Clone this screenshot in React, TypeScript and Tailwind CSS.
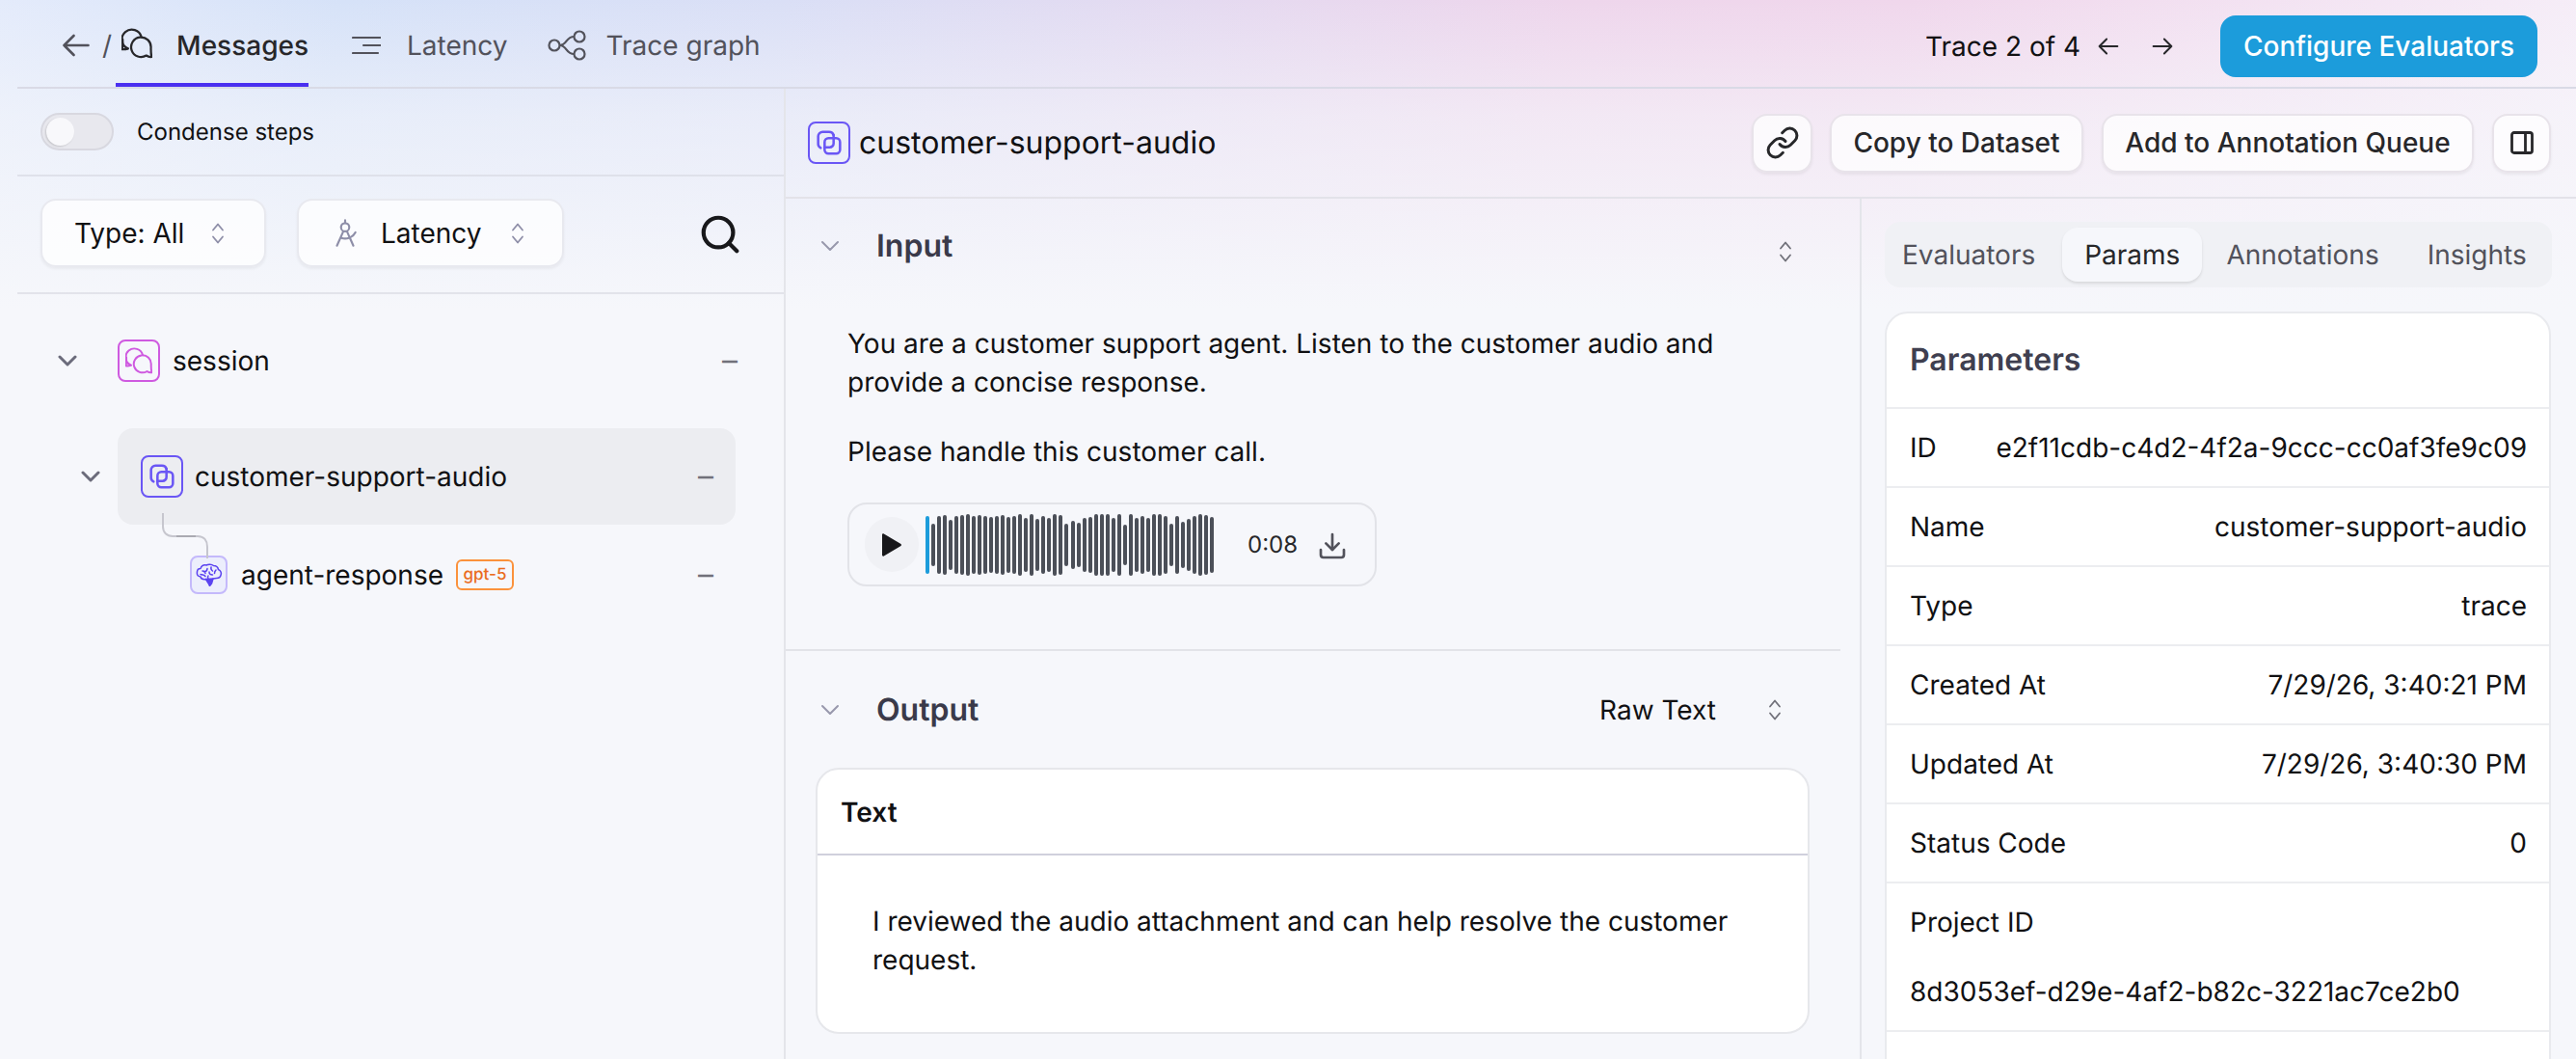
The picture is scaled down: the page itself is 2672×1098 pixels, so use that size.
import { Download, Link, PanelRight, Search } from "lucide-react"
import { PiCompassTool } from "react-icons/pi"

const waveform = [
  60, 44, 60, 62, 52, 60, 62, 64, 60, 62, 60, 58, 60, 62, 58, 60, 64, 56, 64, 54, 60, 56, 64, 62, 44, 50, 46, 56, 58,
  64, 64, 64, 56, 64, 42, 64, 56, 60, 56, 64, 64, 60, 44, 60, 48, 54, 60, 64, 62, 58,
]

const params = [
  { label: "ID", value: "e2f11cdb-c4d2-4f2a-9ccc-cc0af3fe9c09" },
  { label: "Name", value: "customer-support-audio" },
  { label: "Type", value: "trace" },
  { label: "Created At", value: "7/29/26, 3:40:21 PM" },
  { label: "Updated At", value: "7/29/26, 3:40:30 PM" },
  { label: "Status Code", value: "0" },
]

function BubblesIcon({ className }: { className?: string }) {
  return (
    <svg viewBox="0 0 24 24" fill="none" stroke="currentColor" strokeWidth="1.7" strokeLinejoin="round" strokeLinecap="round" className={className}>
      <path d="M19.3 21.4A7.7 7.7 0 1 1 22.9 15.5c0 2.5-.1 4.8.6 7-1.6.2-3.1-.3-4.2-1.1z" />
      <path d="M5 16A7.7 7.7 0 1 1 15.5 7" />
      <path d="M5 16c-1.5.6-3 .8-4.6.6.7-2.4.6-5 .5-7.7" />
    </svg>
  )
}

function SpanIcon({ className }: { className?: string }) {
  return (
    <svg viewBox="0 0 24 24" fill="none" stroke="currentColor" strokeWidth="1.9" strokeLinecap="round" className={className}>
      <rect x="8.5" y="8.5" width="12" height="12" rx="3" />
      <path d="M5.5 16C4.2 15.4 3.5 14.2 3.5 13V7a3.5 3.5 0 0 1 3.5-3.5h5c1.6 0 3 1 3.4 2.4" />
      <path d="M15.5 6v6.5a3 3 0 0 1-3 3H8.5" />
    </svg>
  )
}

function BrainIcon({ className }: { className?: string }) {
  return (
    <svg viewBox="0 0 28 24" fill="none" stroke="currentColor" strokeWidth="1.5" strokeLinecap="round" strokeLinejoin="round" className={className}>
      <path d="M11 16.5C8 17 5.5 16 5 14 2.5 13.5 1 11.5 1.5 9 1.5 7 3 5.5 5 5.5 6 3 8.5 1.5 11 2c2-1.2 5.500-1.200 7.500.5 2.500 0 4.500 1.500 5 4 2.500 1 3.500 3.500 2.500 6-.5 2-2.500 3-4.500 3l-3.500.5" />
      <path d="M7 8c1.500 0 3 1 3 2.500M12 5.500c0 2-1 3-3 3.500M16 4c-.5 2 0 3 1.500 4M14 9c0 2 1.500 3 3.500 3M21 7c-1 1-1.500 2-1.500 3.500M5 11.500c2 .5 4 .5 5 2M13 13c-1 1-.5 2 0 3" />
      <path d="M10.500 16.500l7.500-.5-1.500 5-2 2.500-1.500-3z" fill="currentColor" />
    </svg>
  )
}

function Arrow({ right, className }: { right?: boolean; className?: string }) {
  return (
    <svg viewBox="0 0 28 24" fill="none" stroke="currentColor" strokeWidth="2.6" strokeLinecap="round" strokeLinejoin="round" className={className}>
      {right ? <path d="M1.500 12h25M16.500 2l10 10-10 10" /> : <path d="M26.500 12h-25M11.500 2l-10 10 10 10" />}
    </svg>
  )
}

function UpDown({ className }: { className?: string }) {
  return (
    <svg viewBox="0 0 14 24" fill="none" stroke="currentColor" strokeWidth="1.8" strokeLinecap="round" strokeLinejoin="round" className={className}>
      <path d="M2 8.500 7 2.500l5 6" />
      <path d="M2 15.500 7 21.500l5-6" />
    </svg>
  )
}

function SmallChevron({ className }: { className?: string }) {
  return (
    <svg viewBox="0 0 20 12" fill="none" stroke="currentColor" strokeLinecap="round" strokeLinejoin="round" className={className}>
      <path d="M2 2l8 8 8-8" />
    </svg>
  )
}

function LatencyIcon({ className }: { className?: string }) {
  return (
    <svg viewBox="0 0 30 24" fill="none" stroke="currentColor" strokeWidth="2.200" strokeLinecap="round" className={className}>
      <path d="M1 4h29M12 12h18M1 20h26" />
    </svg>
  )
}

function GraphIcon({ className }: { className?: string }) {
  return (
    <svg viewBox="0 0 40 32" fill="none" stroke="currentColor" strokeWidth="2.200" className={className}>
      <circle cx="7" cy="16" r="5.500" />
      <circle cx="33" cy="7" r="5.500" />
      <circle cx="33" cy="25" r="5.500" />
      <path d="M12.500 16c8 0 6-9 15-9M12.500 16c8 0 6 9 15 9" />
    </svg>
  )
}

function Dash({ className }: { className?: string }) {
  return <span className={`text-[32px] leading-10 text-[#71717a] ${className ?? ""}`}>–</span>
}

function ActionButton({ children, className }: { children: React.ReactNode; className?: string }) {
  return (
    <button className={`flex h-[61px] items-center justify-center rounded-2xl border-2 border-[#e8e3ea] bg-white/75 text-[28px] font-medium text-[#27272a] shadow-[0_2px_3px_rgba(0,0,0,0.06)] ${className ?? ""}`}>
      {children}
    </button>
  )
}

export default function App() {
  return (
    <div className="flex h-[1098px] w-[2672px] flex-col overflow-hidden pl-[18px] text-[28px] leading-10 text-[#111113] [text-rendering:geometricPrecision] [background:linear-gradient(180deg,rgba(246,247,251,0)_0,rgba(246,247,251,0.55)_120px,rgba(246,247,251,1)_320px),linear-gradient(100deg,#e4ebfb_0,#d6e2f8_350px,#dadff6_800px,#eed6ec_1600px,#f0d7ec_1950px,#f6eef8_2672px),#f6f7fb] [font-family:Inter,sans-serif]">
      <header className="flex h-[92px] shrink-0 items-center border-b-2 border-[#d9dae6]">
        <Arrow className="ml-[47px] mt-1 h-6 w-7 text-[#52525b]" />
        <span className="ml-[13px] mt-1 text-[#52525b]">/</span>
        <div className="ml-[4px] flex h-full items-center border-b-4 border-[#4a2ff0] pl-[6px] pt-2">
          <BubblesIcon className="h-8 w-8 -translate-y-[2px] text-[#27272a]" />
          <span className="ml-[25px] font-medium text-[#27272a]">Messages</span>
        </div>
        <div className="ml-[45px] flex items-center pt-1 text-[#52525b]">
          <LatencyIcon className="h-6 w-[30px]" />
          <span className="ml-[27px]">Latency</span>
        </div>
        <div className="ml-[41px] flex items-center pt-1 text-[#52525b]">
          <GraphIcon className="h-8 w-10" />
          <span className="ml-[21px]">Trace graph</span>
        </div>
        <div className="ml-auto mr-[40px] mt-[6px] flex items-center">
          <span>Trace 2 of 4</span>
          <Arrow className="ml-[18px] h-[18px] w-[22px] text-[#27272a]" />
          <Arrow right className="ml-[34px] h-[18px] w-[22px] text-[#27272a]" />
          <button className="ml-[49px] h-16 w-[329px] rounded-2xl bg-[#1c9cdb] font-medium text-white">Configure Evaluators</button>
        </div>
      </header>

      <div className="flex min-h-0 flex-1">
        <aside className="w-[797px] shrink-0 border-r-2 border-[#e4e5ea]">
          <div className="flex h-[91px] items-center border-b-2 border-[#dfe1ea] pl-[24px]">
            <div className="flex h-[39px] w-[76px] items-center rounded-full border-2 border-[#d8d8e0] bg-[#e8e8ee] pl-[4px]">
              <div className="h-[29px] w-[29px] rounded-full bg-[#f8f8fb] shadow-[-1px_1px_2px_rgba(0,0,0,0.15)]" />
            </div>
            <span className="ml-[24px] text-2xl font-normal">Condense steps</span>
          </div>
          <div className="flex h-[122px] items-start border-b-2 border-[#e2e3ea] pl-[24px] pt-[23px]">
            <button className="flex h-[71px] w-[234px] items-center rounded-2xl border-2 border-[#e8e9ef] bg-white/75 pl-[33px] shadow-[0_2px_3px_rgba(0,0,0,0.05)]">
              <span>Type: All</span>
              <UpDown className="ml-[26px] h-6 w-[18px] text-[#8e8ea8]" />
            </button>
            <button className="ml-[32px] flex h-[71px] w-[277px] items-center rounded-2xl border-2 border-[#e8e9ef] bg-white/75 pl-[31px] shadow-[0_2px_3px_rgba(0,0,0,0.05)]">
              <PiCompassTool className="h-[34px] w-[34px] text-[#8e8ea8]" />
              <span className="ml-[20px]">Latency</span>
              <UpDown className="ml-[28px] h-6 w-[18px] text-[#8e8ea8]" />
            </button>
            <Search className="ml-[139px] mt-[14px] h-[46px] w-[46px] text-[#18181b]" strokeWidth={2.2} />
          </div>

          <div className="relative pt-[19px]">
            <div className="flex h-[100px] w-[747px] items-center pl-[42px]">
              <SmallChevron className="h-3 w-5 text-[#6b6b7b] [stroke-width:3]" />
              <div className="ml-[42px] flex h-[44px] w-[44px] items-center justify-center rounded-lg border-2 border-[#cf5ae0] text-[#cf5ae0]">
                <BubblesIcon className="h-7 w-7" />
              </div>
              <span className="ml-[13px]">session</span>
              <Dash className="ml-auto" />
            </div>
            <div className="mt-[20px] flex h-[100px] items-center pl-[64px]">
              <div className="flex w-[24px] justify-center">
                <SmallChevron className="h-3 w-5 text-[#6b6b7b] [stroke-width:3]" />
              </div>
              <div className="ml-[16px] flex h-[100px] w-[641px] items-center rounded-2xl bg-[#ecedf1] pl-[24px] pr-[23px]">
                <div className="flex h-[44px] w-[44px] items-center justify-center rounded-lg border-2 border-[#6a56f5] text-[#6a56f5]">
                  <SpanIcon className="h-8 w-8" />
                </div>
                <span className="ml-[12px]">customer-support-audio</span>
                <Dash className="ml-auto" />
              </div>
            </div>
            <div className="mt-[2px] flex h-[100px] w-[722px] items-center pl-[179px]">
              <div className="flex h-[40px] w-[39px] items-center justify-center rounded-lg border-2 border-[#c4b9fb] bg-[#eceefc] text-[#5b43f0]">
                <BrainIcon className="h-[24px] w-[28px]" />
              </div>
              <span className="ml-[14px]">agent-response</span>
              <span className="ml-[13px] flex h-[32px] w-[60px] items-center justify-center rounded-md border-2 border-[#fb923c] text-[17px] font-medium text-[#ea6c1e]">gpt-5</span>
              <Dash className="ml-auto" />
            </div>
            <svg className="absolute left-[145px] top-[222px] h-[60px] w-[60px]" viewBox="0 0 60 60" fill="none" stroke="#c6c6ce" strokeWidth="2">
              <path d="M6 5v14c0 6 4 10 10 10h26c7 0 10 5 10 11v12" />
              <path d="M20 29h20" stroke="#aaaab2" />
            </svg>
          </div>
        </aside>

        <main className="flex min-w-0 flex-1 flex-col">
          <div className="flex h-[114px] shrink-0 items-center border-b-2 border-[#e3e2e9] pl-[23px] pr-[26px]">
            <div className="flex h-[44px] w-[44px] items-center justify-center rounded-lg border-2 border-[#6a56f5] text-[#6a56f5]">
              <SpanIcon className="h-8 w-8" />
            </div>
            <h1 className="ml-[9px] text-[32px] font-normal">customer-support-audio</h1>
            <ActionButton className="ml-auto w-[63px]">
              <Link className="h-9 w-9" strokeWidth={2} />
            </ActionButton>
            <ActionButton className="ml-[18px] w-[263px]">Copy to Dataset</ActionButton>
            <ActionButton className="ml-[19px] w-[386px]">Add to Annotation Queue</ActionButton>
            <ActionButton className="ml-[19px] w-[61px]">
              <PanelRight className="h-7 w-7" strokeWidth={2.4} />
            </ActionButton>
          </div>

          <div className="flex min-h-0 flex-1">
            <section className="w-[1116px] shrink-0 border-r-2 border-[#e4e5ea]">
              <div className="w-[1094px] border-b-2 border-[#e2e3e8] pb-[65px]">
                <div className="flex h-[98px] items-center pl-[36px] pr-[48px]">
                  <SmallChevron className="h-3 w-5 text-[#9898ac] [stroke-width:2]" />
                  <h2 className="ml-[38px] text-[32px] font-semibold text-[#3a3a4a]">Input</h2>
                  <UpDown className="ml-auto mt-[12px] h-6 w-[18px] text-[#71717a]" />
                </div>
                <div className="mt-[32px] pl-[64px]">
                  <p className="w-[950px]">You are a customer support agent. Listen to the customer audio and provide a concise response.</p>
                  <p className="mt-[32px]">Please handle this customer call.</p>
                  <div className="mt-[33px] flex h-[87px] w-[549px] items-center rounded-[20px] border-2 border-[#e2e3e8] pl-[16px]">
                    <div className="flex h-[57px] w-[56px] items-center justify-center rounded-full bg-[#f0f1f5]">
                      <svg viewBox="0 0 20 24" className="h-6 w-5 fill-[#18181b]">
                        <path d="M0 1.500c0-1 1-1.500 1.800-1L19.500 11c.6.5.6 1.500 0 2L1.800 23.500c-.8.5-1.800 0-1.800-1z" />
                      </svg>
                    </div>
                    <svg viewBox="0 0 300 68" className="ml-[7px] h-[68px] w-[300px]">
                      {waveform.map((h, i) => (
                        <rect key={i} x={Math.round(i * 6.02)} y={34 - h / 2} width="4" height={h} rx="2" fill={i === 0 ? "#1c9cdb" : "#4b4f58"} />
                      ))}
                    </svg>
                    <span className="ml-[34px] text-2xl text-[#27272a]">0:08</span>
                    <Download className="ml-[20px] mt-[2px] h-8 w-8 text-[#52525b]" strokeWidth={2} />
                  </div>
                </div>
              </div>

              <div className="w-[1094px]">
                <div className="flex h-[121px] items-center pl-[36px] pr-[59px]">
                  <SmallChevron className="h-3 w-5 text-[#9898ac] [stroke-width:2]" />
                  <h2 className="ml-[38px] text-[32px] font-semibold text-[#3a3a4a]">Output</h2>
                  <span className="ml-auto">Raw Text</span>
                  <UpDown className="ml-[52px] h-6 w-[18px] text-[#71717a]" />
                </div>
                <div className="ml-[31px] w-[1031px] rounded-3xl border-2 border-[#e6e7eb] bg-white">
                  <div className="flex h-[89px] items-center border-b-2 border-[#d0d0dc] pl-[24px] font-semibold">Text</div>
                  <p className="px-[57px] pb-[55px] pt-[48px]">I reviewed the audio attachment and can help resolve the customer request.</p>
                </div>
              </div>
            </section>

            <section className="min-w-0 flex-1 pl-[24px] pt-[24px]">
              <div className="flex h-[68px] w-[692px] items-center rounded-2xl bg-[#f0f1f5] pl-[18px] text-[#52525b]">
                <span>Evaluators</span>
                <span className="ml-[28px] flex h-[56px] items-center rounded-2xl bg-[#f6f7fb] px-[23px] text-[#27272a] shadow-[0_2px_3px_rgba(0,0,0,0.1)]">Params</span>
                <span className="ml-[25px]">Annotations</span>
                <span className="ml-[50px]">Insights</span>
              </div>
              <div className="mt-[25px] w-[691px] rounded-t-3xl border-2 border-[#e9eaee] bg-white">
                <div className="flex h-[99px] items-center border-b-2 border-[#ecedf0] pb-[2px] pl-[24px] text-[32px] font-semibold text-[#3f3f50]">Parameters</div>
                {params.map((row) => (
                  <div key={row.label} className="flex h-[82px] items-center justify-between border-b-2 border-[#ecedf0] pl-[24px] pr-[23px]">
                    <span>{row.label}</span>
                    <span>{row.value}</span>
                  </div>
                ))}
                <div className="h-[154px] border-b-2 border-[#ecedf0] pl-[24px] pt-[20px]">
                  <div>Project ID</div>
                  <div className="mt-[32px]">8d3053ef-d29e-4af2-b82c-3221ac7ce2b0</div>
                </div>
                <div className="h-[82px]" />
              </div>
            </section>
          </div>
        </main>
      </div>
    </div>
  )
}
